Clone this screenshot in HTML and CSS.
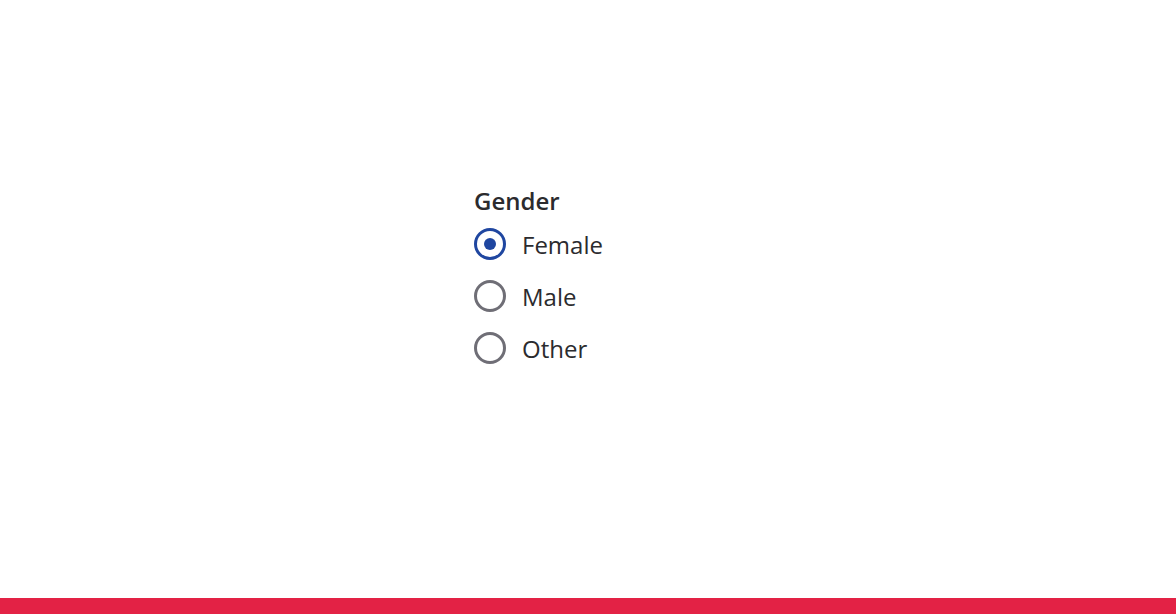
FILE: index.html
```html
<!DOCTYPE html>
<html lang="en">
<head>
  <meta charset="UTF-8" />
  <meta name="viewport" content="width=device-width, initial-scale=1" />
  <title>Gender</title>
  <link rel="stylesheet" href="styles.css">
</head>
<body>
  <main class="page">
    <div class="radio-group" role="radiogroup" aria-labelledby="genderLabel">
      <div class="radio-group__label" id="genderLabel">Gender</div>
      <label class="radio">
        <input type="radio" name="gender" value="female" checked />
        <span class="radio__circle"></span>
        <span class="radio__text">Female</span>
      </label>
      <label class="radio">
        <input type="radio" name="gender" value="male" />
        <span class="radio__circle"></span>
        <span class="radio__text">Male</span>
      </label>
      <label class="radio">
        <input type="radio" name="gender" value="other" />
        <span class="radio__circle"></span>
        <span class="radio__text">Other</span>
      </label>
    </div>
  </main>
  <div class="bottom-bar"></div>
</body>
</html>
```

FILE: styles.css
```css
html, body {
  margin: 0;
  padding: 0;
}
body {
  font-family: 'Open Sans', 'Noto Sans', sans-serif;
  background: #fff;
  color: #2b2b2e;
  height: 614px;
  display: flex;
  flex-direction: column;
}
.page {
  flex: 1;
  display: flex;
  justify-content: center;
  padding-top: 185px;
  box-sizing: border-box;
}
.radio-group {
  width: 228px;
  display: flex;
  flex-direction: column;
  gap: 20px;
}
.radio-group__label {
  font-size: 24px;
  font-weight: 600;
  line-height: 32px;
  margin-bottom: -9px;
}
.radio {
  display: flex;
  align-items: center;
  gap: 16px;
  height: 32px;
  font-size: 24px;
  line-height: 30px;
  cursor: pointer;
}
.radio__text {
  padding-top: 2px;
}
.radio input {
  position: absolute;
  opacity: 0;
  width: 0;
  height: 0;
}
.radio__circle {
  width: 32px;
  height: 32px;
  box-sizing: border-box;
  border: 3px solid #6f6e76;
  border-radius: 50%;
  display: flex;
  align-items: center;
  justify-content: center;
}
.radio input:checked + .radio__circle {
  border-color: #1f46a0;
}
.radio input:checked + .radio__circle::after {
  content: "";
  width: 12px;
  height: 12px;
  border-radius: 50%;
  background: #1f46a0;
}
.bottom-bar {
  height: 16px;
  background: #e32245;
}
```
